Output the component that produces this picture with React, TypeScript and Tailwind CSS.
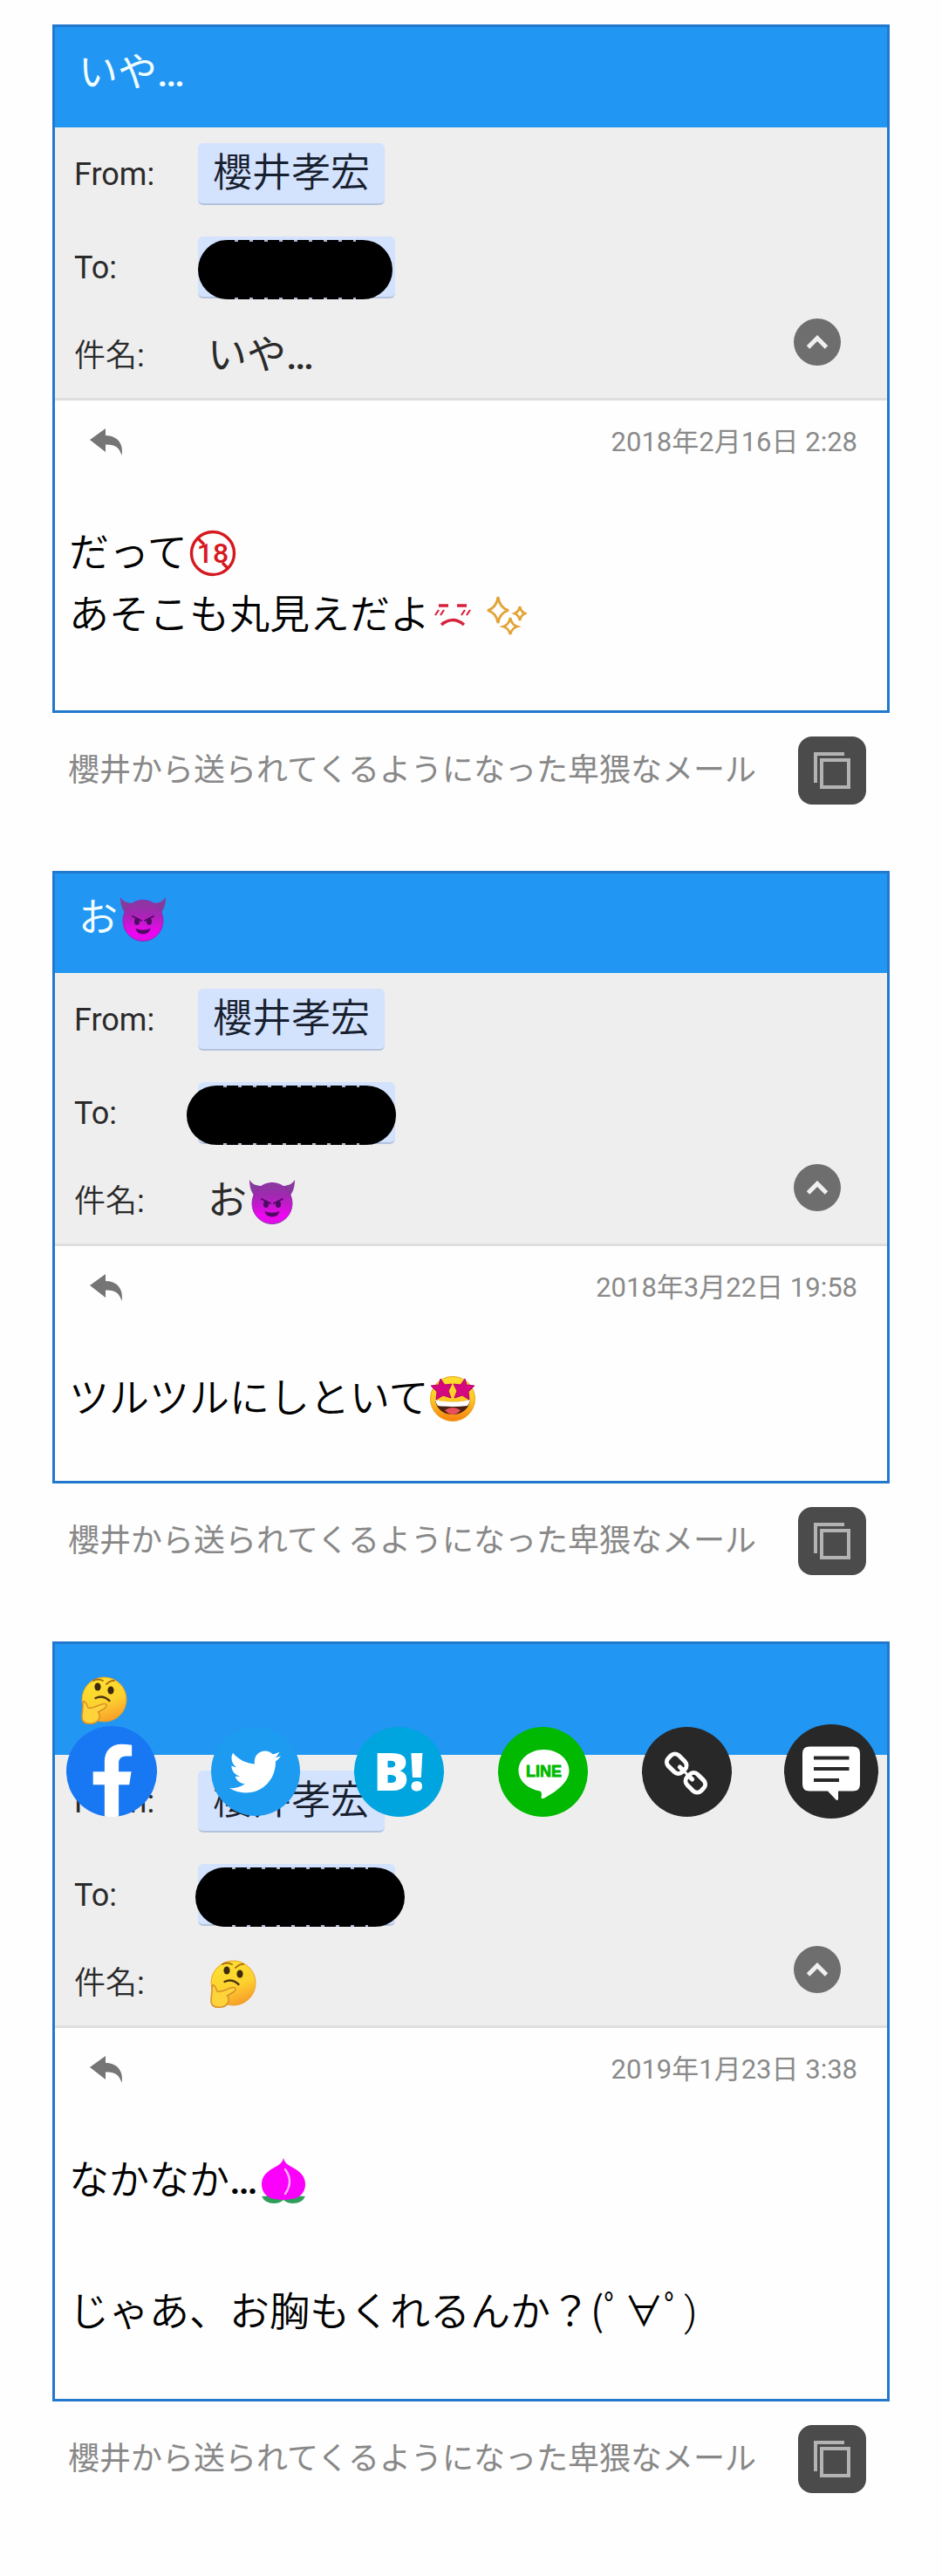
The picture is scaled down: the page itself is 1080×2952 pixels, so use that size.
import React from "react";
import { FaTwitter } from "react-icons/fa";

const FONT = "font-[Roboto,'Noto_Sans_CJK_JP',sans-serif]";

function Devil({ id }: { id: string }) {
  return (
    <svg viewBox="0 0 54 54" className="ml-0.5 size-[54px] shrink-0" role="img" aria-label="悪魔">
      <defs>
        <linearGradient id={id} x1="0" y1="0" x2="0" y2="1">
          <stop offset="0" stopColor="#873a9c" />
          <stop offset="0.35" stopColor="#a526b4" />
          <stop offset="0.8" stopColor="#f005f2" />
          <stop offset="1" stopColor="#dc10e4" />
        </linearGradient>
      </defs>
      <path d="M1 2C4 7 9 9 15 9L7 21C3 16 1 10 1 2ZM53 2C50 7 45 9 39 9L47 21C51 16 53 10 53 2Z" fill="#873a9c" />
      <ellipse cx="27" cy="29" rx="23" ry="23.5" fill={`url(#${id})`} stroke="#9426b5" strokeWidth="1" />
      <path d="M15 24l10 5M39 24l-10 5" stroke="#4d0b63" strokeWidth="1.8" strokeLinecap="round" />
      <ellipse cx="20" cy="30" rx="3" ry="4" fill="#4d0b63" />
      <ellipse cx="34" cy="30" rx="3" ry="4" fill="#4d0b63" />
      <path d="M18.500 38Q27 41.500 35.500 38Q34 44.500 27 44.500Q20 44.500 18.500 38Z" fill="#4d0b63" />
    </svg>
  );
}

function Thinking({ id }: { id: string }) {
  return (
    <svg viewBox="0 0 54 56" className="ml-0.5 h-14 w-[54px] shrink-0" role="img" aria-label="考える顔">
      <defs>
        <linearGradient id={id} x1="0.3" y1="0" x2="0.7" y2="1">
          <stop offset="0" stopColor="#fde030" />
          <stop offset="0.55" stopColor="#fdd22e" />
          <stop offset="1" stopColor="#f79a2a" />
        </linearGradient>
      </defs>
      <circle cx="27.500" cy="27.500" r="25.500" fill={`url(#${id})`} stroke="#eda01f" strokeWidth="1" />
      <path d="M15 6Q20 3 26 6M30 10Q35 5.500 39 6" fill="none" stroke="#a86a12" strokeWidth="1.800" strokeLinecap="round" />
      <ellipse cx="20" cy="13" rx="3.600" ry="4.600" fill="#3d2a0e" />
      <ellipse cx="35" cy="17" rx="3.600" ry="4.600" fill="#3d2a0e" />
      <path d="M17.500 26Q26 22 33.500 29" fill="none" stroke="#4b3410" strokeWidth="2.400" strokeLinecap="round" />
      <path
        d="M3.500 30C6 29 7.500 33 9 37C13 39 19 34 27 32.500C31 32 31 36 27.500 38L20.500 42C24 46 22 54 14 55C6 56 2 54 2 47Z"
        fill="#fed43a"
        stroke="#d9912a"
        strokeWidth="1.600"
        strokeLinejoin="round"
      />
    </svg>
  );
}

function StarStruck() {
  return (
    <svg viewBox="0 0 54 54" className="size-[54px] shrink-0" role="img" aria-label="目が星の笑顔">
      <defs>
        <linearGradient id="star-struck-face" x1="0" y1="0" x2="0" y2="1">
          <stop offset="0" stopColor="#fde02f" />
          <stop offset="0.5" stopColor="#fccb24" />
          <stop offset="1" stopColor="#f77f10" />
        </linearGradient>
      </defs>
      <circle cx="27" cy="27" r="25.500" fill="url(#star-struck-face)" stroke="#e9a11c" strokeWidth="1" />
      <path d="M7 28Q27 34 47 28C46 38 38 45 27 45S8 38 7 28Z" fill="#4a2012" />
      <path d="M7 28Q27 33 47 28Q46 33 44 35Q27 37 10 35Q8 33 7 28Z" fill="#fff" />
      <path d="M18 40Q27 34 36 40Q32 45 27 45T18 40Z" fill="#e8505b" />
      <path d="M13 4l5 7 8-1-4 8 3 8-9-3-8 5 1-9-7-7 9-1Z" fill="#d5087f" stroke="#b80070" strokeLinejoin="round" />
      <path d="M41 4l-5 7-8-1 4 8-3 8 9-3 8 5-1-9 7-7-9-1Z" fill="#d5087f" stroke="#b80070" strokeLinejoin="round" />
    </svg>
  );
}

function Under18() {
  return (
    <svg viewBox="0 0 54 54" className="ml-0.5 size-[54px] shrink-0" role="img" aria-label="18禁">
      <circle cx="27" cy="27" r="24.500" fill="none" stroke="#d6181f" strokeWidth="3.400" />
      <path d="M10 10l7 7M38 38l6 6" stroke="#d6181f" strokeWidth="3.400" />
      <text x="27" y="38" textAnchor="middle" fontFamily="Roboto" fontSize="32" fontWeight="500" fill="#d6181f">
        18
      </text>
    </svg>
  );
}

function Upset() {
  return (
    <svg viewBox="0 0 42 28" className="ml-[5px] h-7 w-[42px] shrink-0" role="img" aria-label="怒り顔" fill="none" stroke="#d8203c">
      <path d="M5 3h11M26 3h11" strokeWidth="3.400" />
      <path d="M5 8l-4 6M11 8l-4 6M35 8l-4 6M41 8l-4 6" strokeWidth="2.200" />
      <path d="M8 25Q21 14 34 25" strokeWidth="3.600" />
    </svg>
  );
}

function Sparkles() {
  return (
    <svg viewBox="0 0 48 48" className="ml-4 size-12 shrink-0" role="img" aria-label="きらきら" fill="none" stroke="#e3a336" strokeWidth="2.800">
      <path d="M15 3Q17 16 27 18.500Q17 21 15 33Q13 21 3 18.500Q13 16 15 3Z" />
      <path d="M40 14Q41 20 46 22Q41 24 40 30Q39 24 34 22Q39 20 40 14Z" />
      <path d="M29 27Q30.500 35 37 37Q30.500 39 29 46Q27.500 39 21 37Q27.500 35 29 27Z" />
    </svg>
  );
}

function Peach() {
  return (
    <svg viewBox="0 0 54 54" className="ml-0.5 size-[54px] shrink-0" role="img" aria-label="桃">
      <path d="M2 45Q14 43 27 48Q40 43 52 45Q48 53 38 53Q31 53 27 49Q23 53 16 53Q6 53 2 45Z" fill="#2f9e5b" />
      <path d="M27 1Q28 7 36 11C46 16 52 22 52 31C52 43 42 48 36 48Q30 49 27 49Q24 49 18 48C12 48 2 43 2 31C2 22 8 16 18 11Q26 7 27 1Z" fill="#fb00fb" />
      <path d="M29 14Q39 28 29 42" fill="none" stroke="#ffb8fb" strokeWidth="2.400" strokeLinecap="round" />
    </svg>
  );
}

function Dots() {
  return <span className="font-medium">…</span>;
}

type Mail = {
  id: string;
  title: React.ReactNode;
  titlePad: string;
  redaction: string;
  subject: React.ReactNode;
  date: string;
  body: React.ReactNode;
  bodyPad: string;
};

function MailCard({ mail }: { mail: Mail }) {
  return (
    <article className="border-[3px] border-[#2278cc] bg-[#fefefe]">
      <h2 className={`flex items-center bg-[#2196f3] pl-[27px] text-[45px] leading-[72px] font-normal text-[#f2fdff] ${mail.titlePad}`}>
        {mail.title}
      </h2>
      <div className="border-b-[3px] border-[#dedede] bg-[#eeeeee] pt-[18px] pb-3 pl-[22px] text-[#2a2a2a]">
        <div className="flex items-center">
          <span className="w-[142px] text-4xl">From:</span>
          <span className="rounded-md border-b-2 border-[#b4c3dc] bg-[#d3e2fd] px-[17px] text-[45px] leading-[69px] font-[350] text-[#17202e]">櫻井孝宏</span>
        </div>
        <div className="mt-9 flex items-center">
          <span className="w-[142px] text-4xl">To:</span>
          <span className="relative h-[71px] w-[226px] rounded-md border-b-2 border-[#b4c3dc] bg-[#d3e2fd]">
            <span className={`absolute top-1 flex h-[68px] flex-col justify-between rounded-full bg-black px-[42px] ${mail.redaction}`}>
              <span className="h-0.5 bg-[repeating-linear-gradient(90deg,#a9b6cd_0_4px,#000_4px_17px)]" />
              <span className="h-0.5 bg-[repeating-linear-gradient(90deg,#a9b6cd_0_4px,#000_4px_17px)]" />
            </span>
          </span>
        </div>
        <div className="mt-[23px] flex items-start pr-[53px]">
          <span className="mt-[7px] w-[142px] text-4xl leading-[72px]">
            <span className="font-[350]">件名</span>:
          </span>
          <span className="mt-[7px] flex h-[72px] flex-1 items-center pl-[11px] text-[45px] leading-[72px]">{mail.subject}</span>
          <button type="button" aria-label="詳細を閉じる" className="flex size-[54px] items-center justify-center rounded-full bg-[#6e6e6e]">
            <svg viewBox="0 0 24 16" className="h-4 w-6" fill="none" stroke="#f0f0f0" strokeWidth="5">
              <path d="M1.500 14L12 3.500L22.500 14" />
            </svg>
          </button>
        </div>
      </div>
      <div className="flex h-24 items-center justify-between pr-[34px] pl-10">
        <button type="button" aria-label="返信">
          <svg viewBox="0 0 38 32" className="h-8 w-[38px]" fill="#757575">
            <path d="M0 13L18 0V8C31 8 39 17 36.500 31C34 22 29 18 18 18.500V27Z" />
          </svg>
        </button>
        <time className="text-[31px] text-[#8a8a8a]">{mail.date}</time>
      </div>
      <div className={`pt-[43px] pl-4 text-[46px] leading-[71px] font-[350] text-black ${mail.bodyPad}`}>{mail.body}</div>
    </article>
  );
}

function Caption() {
  return (
    <figcaption className="flex items-center justify-between pt-[27px] pr-[27px] pl-[18px]">
      <span className="text-4xl text-[#888888]">櫻井から送られてくるようになった卑猥なメール</span>
      <button type="button" aria-label="画像を拡大" className="flex size-[78px] items-center justify-center rounded-2xl bg-[#4b4b4b]">
        <svg viewBox="0 0 42 42" className="size-[42px]" fill="none" stroke="#b3b3b3" strokeWidth="4">
          <path d="M2 35V2H35" />
          <path d="M9 9H40V40H9Z" />
        </svg>
      </button>
    </figcaption>
  );
}

function ShareBar() {
  return (
    <nav aria-label="シェア" className="absolute inset-x-[-15px] top-[95px] grid grid-cols-6 items-center justify-items-center">
      <a href="#facebook" aria-label="Facebook">
        <svg viewBox="0 0 24 24" className="size-[104px]">
          <circle cx="12" cy="12" r="12" fill="#1877f2" />
          <path
            fill="#fff"
            d="M16.670 15.540l.532-3.470h-3.328V9.820c0-.95.465-1.870 1.956-1.870h1.513V4.996s-1.374-.235-2.686-.235c-2.741 0-4.533 1.662-4.533 4.669v2.640H7.078v3.470h3.047v8.320a12.100 12.100 0 0 0 3.750 0V15.540z"
          />
        </svg>
      </a>
      <a href="#twitter" aria-label="Twitter" className="flex size-[102px] items-center justify-center rounded-full bg-[#1d9bf0] text-white">
        <FaTwitter className="size-[59px]" />
      </a>
      <a href="#hatena" aria-label="はてなブックマーク" className="size-[103px] rounded-full bg-[#00a4de]">
        <svg viewBox="0 0 103 103" className="size-full">
          <text x="22" y="73" fontFamily="Open Sans" fontWeight="800" fontSize="61" fill="#fff">
            B!
          </text>
        </svg>
      </a>
      <a href="#line" aria-label="LINE" className="size-[103px] rounded-full bg-[#00b900]">
        <svg viewBox="0 0 103 103" className="size-full">
          <path d="M52.500 26C36 26 23.500 37 23.500 50C23.500 62 34 71 48 73.500C50.500 74.500 50 78 49.500 81C50 83 52 82 54 81C63 76 81.500 65 81.500 50C81.500 37 69 26 52.500 26Z" fill="#fff" />
          <text x="52.500" y="57" textAnchor="middle" fontFamily="Liberation Sans" fontWeight="700" fontSize="18" fill="#00b900" stroke="#00b900" strokeWidth="0.800">
            LINE
          </text>
        </svg>
      </a>
      <a href="#copy" aria-label="リンクをコピー" className="size-[103px] rounded-full bg-[#282828]">
        <svg viewBox="0 0 103 103" className="size-full" fill="none" stroke="#fff" strokeWidth="5" strokeLinecap="round">
          <g transform="rotate(45 50.5 53)">
            <rect x="24" y="44.500" width="22.500" height="17" rx="6.500" />
            <rect x="54.500" y="44.500" width="22.500" height="17" rx="6.500" />
            <path d="M40.500 53H45M56 53H60.500" />
            <path d="M47 53H54" strokeWidth="3" />
          </g>
        </svg>
      </a>
      <a href="#comments" aria-label="コメント" className="size-[108px] rounded-full bg-[#282828]">
        <svg viewBox="0 0 108 108" className="size-full">
          <path d="M29 25.500H79Q87 25.500 87 33.500V68.500Q87 76.500 79 76.500H62V86Q61 88 59 86L50 76.500H29Q21 76.500 21 68.500V33.500Q21 25.500 29 25.500Z" fill="#fff" />
          <path d="M34 38.500H74.500M34 51H74.500M34 64H63" stroke="#282828" strokeWidth="4" />
        </svg>
      </a>
    </nav>
  );
}

const MAILS: Mail[] = [
  {
    id: "iya",
    title: <>いや<Dots /></>,
    titlePad: "pt-[17px] pb-[26px]",
    redaction: "left-0 w-[223px]",
    subject: <>いや<Dots /></>,
    date: "2018年2月16日 2:28",
    bodyPad: "pb-[74px]",
    body: (
      <>
        <p className="flex items-center">だって<Under18 /></p>
        <p className="flex items-center">あそこも丸見えだよ<Upset /><Sparkles /></p>
      </>
    ),
  },
  {
    id: "o",
    title: <>お<Devil id="devil-title" /></>,
    titlePad: "pt-4 pb-[26px]",
    redaction: "left-[-13px] w-[240px]",
    subject: <>お<Devil id="devil-subject" /></>,
    date: "2018年3月22日 19:58",
    bodyPad: "pb-[59px]",
    body: <p className="flex items-center">ツルツルにしといて<StarStruck /></p>,
  },
  {
    id: "thinking",
    title: <Thinking id="thinking-title" />,
    titlePad: "pt-[36px] pb-[35px]",
    redaction: "left-[-3px] w-[240px]",
    subject: <Thinking id="thinking-subject" />,
    date: "2019年1月23日 3:38",
    bodyPad: "pb-16",
    body: (
      <>
        <p className="flex items-center">なかなか<Dots /><Peach /></p>
        <p className="mt-20">じゃあ、お胸もくれるんか？(ﾟ∀ﾟ)</p>
      </>
    ),
  },
];

export default function App() {
  return (
    <main className={`flex min-h-screen flex-col gap-[76px] bg-[#fefefe] px-[60px] pt-7 pb-20 ${FONT}`}>
      {MAILS.map((mail) => (
        <figure key={mail.id} className="relative">
          <MailCard mail={mail} />
          <Caption />
          {mail.id === "thinking" && <ShareBar />}
        </figure>
      ))}
    </main>
  );
}
